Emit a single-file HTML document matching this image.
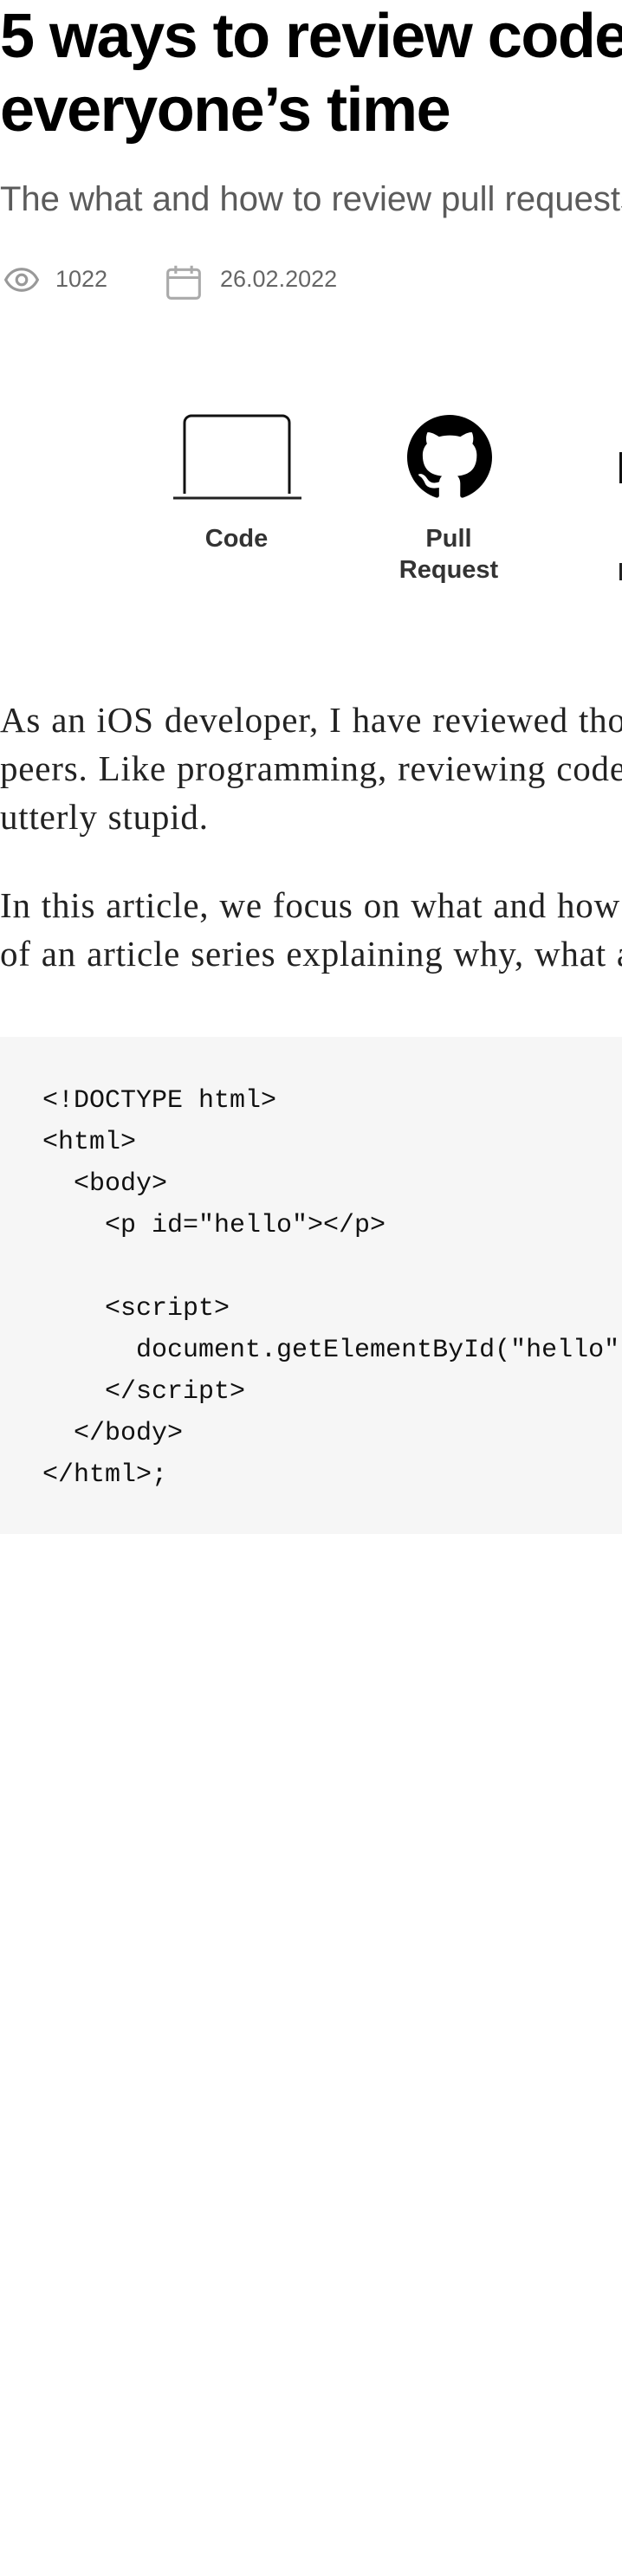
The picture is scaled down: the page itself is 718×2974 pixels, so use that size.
<!DOCTYPE html>
<html><head><meta charset="utf-8"><style>
html,body{margin:0;padding:0;background:#fff;}
body{width:718px;height:2974px;overflow:hidden;position:relative;font-family:"Liberation Sans",sans-serif;}
.a{position:absolute;white-space:nowrap;}
h1{position:absolute;left:0;top:0;margin:0;font-size:72px;line-height:85px;font-weight:bold;letter-spacing:-1.5px;color:#000;white-space:nowrap;}
.sub{left:0;top:208px;font-size:40px;color:#5b5b5b;}
.meta{font-size:27px;color:#666;top:307px;}
.lbl{font-size:29px;font-weight:bold;color:#333;text-align:center;line-height:36px;}
.p{left:0;font-family:"Liberation Serif",serif;font-size:41px;color:#222;letter-spacing:0.8px;word-spacing:1px;line-height:56px;}
.code{position:absolute;left:0;top:1197px;width:718px;height:574px;background:#f6f6f6;}
pre{position:absolute;left:49px;top:1247px;margin:0;font-family:"Liberation Mono",monospace;font-size:30px;line-height:48px;color:#111;}
</style></head><body>
<h1>5 ways to review code<br>everyone’s time</h1>
<div class="a sub">The what and how to review pull requests</div>
<svg class="a" style="left:4px;top:302px" width="42" height="42" viewBox="0 0 24 24" fill="none" stroke="#999" stroke-width="1.8"><path d="M1.5 12C4 7 8 5 12 5s8 2 10.5 7C20 17 16 19 12 19S4 17 1.5 12z"/><circle cx="12" cy="12" r="3.3"/></svg>
<div class="a meta" style="left:64px">1022</div>
<svg class="a" style="left:190px;top:304px" width="44" height="44" viewBox="0 0 24 24" fill="none" stroke="#aaa" stroke-width="1.7"><rect x="2" y="4" width="20" height="18" rx="2"/><path d="M2 9h20M7 1.5v5M17 1.5v5"/></svg>
<div class="a meta" style="left:254px">26.02.2022</div>
<svg class="a" style="left:198px;top:475px" width="152" height="105" viewBox="0 0 152 105"><path d="M15 95V13a8 8 0 0 1 8-8h105a8 8 0 0 1 8 8v82" fill="none" stroke="#111" stroke-width="3"/><path d="M2 100h148" stroke="#222" stroke-width="3"/></svg>
<svg class="a" style="left:470px;top:479px" width="98" height="98" viewBox="0 0 16 16"><path fill="#000" d="M8 0C3.58 0 0 3.58 0 8c0 3.540 2.290 6.530 5.470 7.590.4.07.55-.17.55-.38 0-.19-.01-.82-.01-1.490-2.01.37-2.53-.49-2.69-.94-.09-.23-.48-.94-.82-1.13-.28-.15-.68-.52-.01-.53.63-.01 1.08.58 1.23.82.72 1.21 1.87.87 2.33.66.07-.52.28-.87.51-1.07-1.78-.2-3.64-.89-3.64-3.95 0-.87.31-1.59.82-2.15-.08-.2-.36-1.020.08-2.12 0 0 .67-.21 2.2.82.64-.18 1.32-.27 2-.27.68 0 1.36.09 2 .27 1.53-1.04 2.2-.82 2.2-.82.44 1.1.16 1.92.08 2.12.51.56.82 1.27.82 2.15 0 3.07-1.87 3.75-3.65 3.95.29.25.54.73.54 1.48 0 1.07-.01 1.93-.01 2.2 0 .21.15.46.55.38A8.013 8.013 0 0 0 16 8c0-4.42-3.58-8-8-8z"/></svg>
<div class="a" style="left:715px;top:522px;width:3px;height:36px;background:#111"></div>
<div class="a lbl" style="left:213px;top:604px;width:120px">Code</div>
<div class="a lbl" style="left:455px;top:604px;width:126px">Pull<br>Request</div>
<div class="a" style="left:715px;top:650px;width:3px;height:20px;background:#222"></div>
<div class="a p" style="top:803px">As an iOS developer, I have reviewed thousands of pull requests from<br>peers. Like programming, reviewing code can be made fun or<br>utterly stupid.</div>
<div class="a p" style="top:1017px">In this article, we focus on what and how to review code. It is part<br>of an article series explaining why, what and how.</div>
<div class="code"></div>
<pre>&lt;!DOCTYPE html&gt;
&lt;html&gt;
  &lt;body&gt;
    &lt;p id="hello"&gt;&lt;/p&gt;

    &lt;script&gt;
      document.getElementById("hello").innerHTML = "Hello";
    &lt;/script&gt;
  &lt;/body&gt;
&lt;/html&gt;;</pre>
</body></html>
